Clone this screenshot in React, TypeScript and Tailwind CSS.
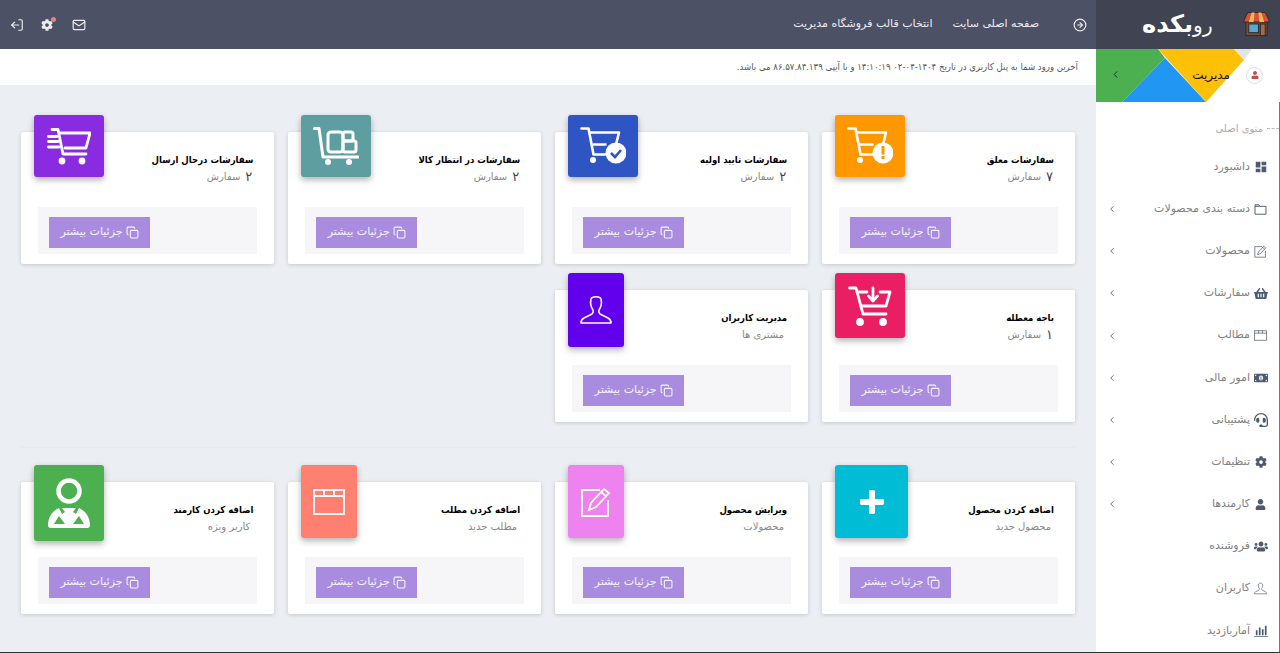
import React from "react";
import { FaCog, FaHeadset, FaShoppingBasket, FaUser, FaUsers, FaMoneyBillAlt } from "react-icons/fa";
import { MdDashboard } from "react-icons/md";
import { LuChevronLeft, LuCopy, LuLogOut, LuMail, LuCircleArrowRight } from "react-icons/lu";

const BadgeCart = ({ children }: { children: React.ReactNode }) => (
  <svg viewBox="0 0 46 40" className="w-[46px] h-[40px]">
    <path d="M1.500 2.500h7l5 26h19" fill="none" stroke="white" strokeWidth="2.6" strokeLinecap="round" strokeLinejoin="round" />
    <path d="M10 6.500h29l-3 12M12.500 18.500h14" fill="none" stroke="white" strokeWidth="2.6" strokeLinejoin="round" />
    <circle cx="13" cy="34" r="3" fill="white" />
    <circle cx="36" cy="27" r="10.500" fill="white" />
    {children}
  </svg>
);

const OrangeCart = () => (
  <BadgeCart>
    <rect x="34.500" y="20" width="3" height="8.500" fill="#ff9800" />
    <rect x="34.500" y="30" width="3" height="3" fill="#ff9800" />
  </BadgeCart>
);

const BlueCart = () => (
  <BadgeCart>
    <path d="M31 27l4 4 6-7" fill="none" stroke="#2f55c5" strokeWidth="2.6" />
  </BadgeCart>
);

const DollyIcon = () => (
  <svg viewBox="0 0 46 38" className="w-[46px] h-[38px]" fill="none" stroke="white" strokeWidth="3" strokeLinecap="round" strokeLinejoin="round">
    <path d="M1.500 1.500H6l4 28.500h35" />
    <rect x="15" y="5" width="15" height="20" rx="3" />
    <rect x="30" y="5" width="10" height="9" rx="2" />
    <rect x="30" y="14" width="13" height="11" rx="2" />
    <circle cx="15" cy="35" r="1.500" fill="white" />
    <circle cx="36" cy="35" r="1.500" fill="white" />
  </svg>
);

const FastCart = () => (
  <svg viewBox="0 0 44 37" className="w-[44px] h-[37px]" fill="none" stroke="white" strokeWidth="2.8" strokeLinecap="round" strokeLinejoin="round">
    <path d="M5 1.500h6l5 24.500h23" />
    <path d="M13 5h30l-4 15H18" />
    <path d="M1.500 8.500H10M1.500 13.500H11M1.500 19H12" />
    <circle cx="15" cy="33" r="2" fill="white" />
    <circle cx="35" cy="33" r="2" fill="white" />
  </svg>
);

const DownCart = () => (
  <svg viewBox="0 0 44 40" className="w-[44px] h-[40px]" fill="none" stroke="white" strokeWidth="2.8" strokeLinecap="round" strokeLinejoin="round">
    <path d="M1.500 2h6.500l7 26h23" />
    <path d="M9 6h10M32 6h10l-4 14H13" />
    <path d="M25 2v11M20.500 10l4.500 5 4.500-5" />
    <circle cx="12" cy="36" r="2.500" fill="white" />
    <circle cx="35" cy="36" r="2.500" fill="white" />
  </svg>
);

const UserOutline = ({ className }: { className: string }) => (
  <svg viewBox="0 0 32 32" className={className} fill="none" stroke="currentColor" strokeWidth="1.6" strokeLinejoin="round">
    <path d="M11 5c1-3 9-3 10 0 1 4 0 8-2 11-1 2 0 3 1 4l8 4c2 1 3 3 3 5H1c0-2 1-4 3-5l8-4c1-1 2-2 1-4-2-3-3-7-2-11z" />
  </svg>
);

const EditIcon = ({ className }: { className: string }) => (
  <svg viewBox="0 0 32 32" className={className} fill="none" stroke="currentColor" strokeWidth="1.8">
    <path d="M20 4H2v26h26V14" />
    <path d="M24 3l5 4-13 14-7 3 2-7zM21 6l5 4" />
  </svg>
);

const WindowIcon = ({ className }: { className: string }) => (
  <svg viewBox="0 0 32 28" className={className} fill="none" stroke="currentColor" strokeWidth="1.8">
    <rect x="1" y="2" width="30" height="24" />
    <path d="M1 8h30M11 2v6M21 2v6" />
  </svg>
);

const StaffIcon = () => (
  <svg viewBox="0 0 44 50" className="w-[44px] h-[50px]">
    <circle cx="22" cy="13" r="10.500" fill="none" stroke="white" strokeWidth="4.500" />
    <path
      fill="white"
      fillRule="evenodd"
      d="M15 30h14l-3 4 3 2 3-6c7 3 11 10 11 17 0 2-1 3-3 3H4c-2 0-3-1-3-3 0-7 4-14 11-17l3 6 3-2zM12 38l-5 8h11zM32 38l-6 8h11z"
    />
  </svg>
);

const PlusIcon = () => (
  <svg viewBox="0 0 26 26" className="w-[26px] h-[26px]" fill="white">
    <path d="M10 2a2 2 0 0 1 2-1h2a2 2 0 0 1 2 1v8h8a2 2 0 0 1 1 2v2a2 2 0 0 1-1 2h-8v8a2 2 0 0 1-2 1h-2a2 2 0 0 1-2-1v-8H2a2 2 0 0 1-1-2v-2a2 2 0 0 1 1-2h8z" />
  </svg>
);

const FolderIcon = () => (
  <svg viewBox="0 0 16 14" className="w-[13px] h-[11px]" fill="none" stroke="currentColor" strokeWidth="1.2">
    <path d="M1 1h5l1 2h8v10H1zM1 3h6" />
  </svg>
);

const ChartIcon = () => (
  <svg viewBox="0 0 16 14" className="w-[14px] h-[12px]" fill="currentColor">
    <path d="M0 13h16v1H0zM2 6h2v6H2zM5.500 3h2v9h-2zM9 5h2v7H9zM12.500 1h2v11h-2z" />
  </svg>
);

const ShopLogo = () => (
  <svg viewBox="0 0 28 26" className="w-[27px] h-[26px]">
    <rect x="3" y="9" width="22" height="16" fill="#7a4a32" stroke="#2b2b2b" />
    <rect x="6" y="13" width="10" height="9" fill="#5aa7d6" stroke="#2b2b2b" />
    <rect x="18" y="13" width="5" height="12" fill="#a8694a" stroke="#2b2b2b" />
    <path d="M5 1h18l4 8v2H1V9z" fill="#d94f3d" stroke="#2b2b2b" />
    <path d="M9 1h3l-1 10H6zM16 1h3l3 10h-5z" fill="#f2b84b" />
  </svg>
);

const topCards = [
  { title: "سفارشات معلق", sub: "۷", unit: "سفارش", color: "bg-[#ff9800]", box: "w-[70px] h-[62px]", icon: <OrangeCart /> },
  { title: "سفارشات تایید اولیه", sub: "۲", unit: "سفارش", color: "bg-[#2f55c5]", box: "w-[70px] h-[62px]", icon: <BlueCart /> },
  { title: "سفارشات در انتظار کالا", sub: "۲", unit: "سفارش", color: "bg-[#5f9ea0]", box: "w-[70px] h-[62px]", icon: <DollyIcon /> },
  { title: "سفارشات درحال ارسال", sub: "۲", unit: "سفارش", color: "bg-[#8a2be2]", box: "w-[70px] h-[62px]", icon: <FastCart /> },
  { title: "باجه معطله", sub: "۱", unit: "سفارش", color: "bg-[#e91e63]", box: "w-[70px] h-[65px]", icon: <DownCart /> },
  { title: "مدیریت کاربران", sub: "", unit: "مشتری ها", color: "bg-[#6200ee]", box: "w-[56px] h-[74px]", icon: <UserOutline className="w-[32px] h-[32px] text-white" /> },
];

const bottomCards = [
  { title: "اضافه کردن محصول", sub: "", unit: "محصول جدید", color: "bg-[#00bcd4]", box: "w-[73px] h-[73px]", icon: <PlusIcon /> },
  { title: "ویرایش محصول", sub: "", unit: "محصولات", color: "bg-[#ee82ee]", box: "w-[56px] h-[73px]", icon: <EditIcon className="w-[32px] h-[32px] text-white" /> },
  { title: "اضافه کردن مطلب", sub: "", unit: "مطلب جدید", color: "bg-[#ff7f70]", box: "w-[56px] h-[73px]", icon: <WindowIcon className="w-[32px] h-[28px] text-white" /> },
  { title: "اضافه کردن کارمند", sub: "", unit: "کاربر ویژه", color: "bg-[#4caf50]", box: "w-[70px] h-[76px]", icon: <StaffIcon /> },
];

const menu = [
  { label: "داشبورد", icon: <MdDashboard className="w-[14px] h-[14px]" />, arrow: false },
  { label: "دسته بندی محصولات", icon: <FolderIcon />, arrow: true },
  { label: "محصولات", icon: <EditIcon className="w-[13px] h-[13px]" />, arrow: true },
  { label: "سفارشات", icon: <FaShoppingBasket className="w-[14px] h-[13px]" />, arrow: true },
  { label: "مطالب", icon: <WindowIcon className="w-[13px] h-[11px]" />, arrow: true },
  { label: "امور مالی", icon: <FaMoneyBillAlt className="w-[14px] h-[12px]" />, arrow: true },
  { label: "پشتیبانی", icon: <FaHeadset className="w-[14px] h-[14px]" />, arrow: true },
  { label: "تنظیمات", icon: <FaCog className="w-[12px] h-[12px]" />, arrow: true },
  { label: "کارمندها", icon: <FaUser className="w-[11px] h-[11px]" />, arrow: true },
  { label: "فروشنده", icon: <FaUsers className="w-[14px] h-[13px]" />, arrow: false },
  { label: "کاربران", icon: <UserOutline className="w-[13px] h-[13px]" />, arrow: false },
  { label: "آماربازدید", icon: <ChartIcon />, arrow: false },
];

type CardData = (typeof topCards)[number];

const Card = ({ card }: { card: CardData }) => (
  <div className="relative h-[132px] bg-white rounded-[2px] shadow-[0_1px_4px_rgba(0,0,0,0.16)] flex flex-col">
    <div className={`absolute left-[13px] top-[-17px] rounded-[3px] flex items-center justify-center shadow-[0_3px_6px_rgba(0,0,0,0.3)] ${card.color} ${card.box}`}>
      {card.icon}
    </div>
    <div className="pt-[19px] pr-[21px] h-[75px]">
      <div className="text-[9.500px] font-bold leading-[18px] text-black [font-family:'DejaVu_Sans_Condensed','DejaVu_Sans',sans-serif]">{card.title}</div>
      <div className="flex items-center gap-[5px] text-[10px] leading-[16px] text-[#888] pr-[1px]">
        {card.sub && <span className="text-[13px] text-[#444]">{card.sub}</span>}
        <span className={card.sub ? "" : "pr-[2px]"}>{card.unit}</span>
      </div>
    </div>
    <div className="mx-[17px] h-[47px] bg-[#f6f6f9] flex justify-end pt-[10px] pl-[11px]">
      <a href="#" className="w-[101px] h-[31px] bg-[#a98ce0] text-white/90 text-[11px] flex items-center justify-center gap-[3px]">
        <LuCopy className="w-[13px] h-[13px]" />
        <span>جزئیات بیشتر</span>
      </a>
    </div>
  </div>
);

export default function App() {
  return (
    <div dir="rtl" className="flex w-[1280px] h-[653px] overflow-hidden border-b border-[#333] bg-white [font-family:'DejaVu_Sans',sans-serif]">
      {/* Sidebar */}
      <aside className="w-[184px] shrink-0 flex flex-col bg-white">
        <div className="h-[49px] bg-[#3f4352] flex items-center pr-[10px] gap-[30px]">
          <ShopLogo />
          <div className="text-white leading-none flex items-baseline">
            <span className="text-[20px] font-light">رو</span>
            <span className="text-[24px] font-bold">بکده</span>
          </div>
        </div>
        <div className="relative h-[53px] overflow-hidden flex items-center pr-[17px] gap-[16px]">
          <svg viewBox="0 0 184 53" className="absolute inset-0 w-[184px] h-[53px]">
            <path d="M0 0h62l7 9-43 44H0z" fill="#4caf50" />
            <path d="M69 9l41 44H26z" fill="#2196f3" />
            <path d="M62 0h76l10 11-38 42z" fill="#ffc107" />
            <path d="M138 0h18l-8 11z" fill="#e4e4e4" />
          </svg>
          <div className="relative w-[17px] h-[17px] rounded-full border border-[#ddd] bg-white flex items-center justify-center">
            <FaUser className="w-[8px] h-[8px] text-[#c0504d]" />
          </div>
          <span className="relative text-[12px] text-[#111]">مدیریت</span>
          <LuChevronLeft className="absolute left-[14px] top-[20px] w-[11px] h-[11px] text-[#222]" />
        </div>
        <div className="flex-1 border-r border-[#777] flex flex-col">
          <div className="flex items-center gap-[4px] h-[17px] mt-[18px] text-[10px] text-[#aaa]">
            <span className="w-[12px] border-t border-dashed border-[#bbb]"></span>
            <span>منوی اصلی</span>
          </div>
          <nav className="flex flex-col mt-[9px]">
            {menu.map((item) => (
              <a key={item.label} href="#" className="h-[42.200px] flex items-center pr-[11px] pl-[11px] gap-[3px] text-[#4e5a70]">
                <span className="w-[15px] flex justify-center shrink-0">{item.icon}</span>
                <span className="text-[11px] text-[#808080]">{item.label}</span>
                {item.arrow && <LuChevronLeft className="mr-auto w-[10px] h-[10px] text-[#555]" />}
              </a>
            ))}
          </nav>
        </div>
      </aside>

      {/* Main */}
      <main className="flex-1 flex flex-col min-w-0">
        <header className="h-[49px] bg-[#4d5165] flex items-center text-[#ececf1] text-[11px] pr-[9px] pl-[10px]">
          <LuCircleArrowRight className="w-[14px] h-[14px]" />
          <a href="#" className="mr-[34px]">صفحه اصلی سایت</a>
          <a href="#" className="mr-[20px]">انتخاب قالب فروشگاه مدیریت</a>
          <div className="mr-auto flex items-center gap-[15px] flex-row-reverse" dir="ltr">
            <LuMail className="w-[14px] h-[14px] ml-[2px]" />
            <div className="relative mx-[2px]">
              <FaCog className="w-[12px] h-[12px]" />
              <span className="absolute top-[-2px] right-[-3px] w-[5px] h-[5px] rounded-full bg-[#f08070]"></span>
            </div>
            <LuLogOut className="w-[14px] h-[14px] rotate-180" />
          </div>
        </header>
        <div className="h-[36px] bg-white flex items-center pr-[18px] text-[9.500px] font-medium text-[#555] [font-family:'DejaVu_Sans_Condensed','DejaVu_Sans',sans-serif]">
          آخرین ورود شما به پنل کاربری در تاریخ ۱۴۰۴-۰۴-۰۲ ۱۴:۱۰:۱۹ و با آیپی ۸۶.۵۷.۸۴.۱۳۹ می باشد.
        </div>
        <section className="flex-1 bg-[#ebeef2] px-[21px] pt-[47px]">
          <div className="grid grid-cols-[253px_253px_253px_1fr] gap-x-[13.900px] gap-y-[26px]">
            {topCards.map((card) => (
              <Card key={card.title} card={card} />
            ))}
          </div>
          <hr className="mt-[25px] mb-[34px] border-[#e6e9ed]" />
          <div className="grid grid-cols-[253px_253px_253px_1fr] gap-x-[13.900px]">
            {bottomCards.map((card) => (
              <Card key={card.title} card={card} />
            ))}
          </div>
        </section>
      </main>
    </div>
  );
}
